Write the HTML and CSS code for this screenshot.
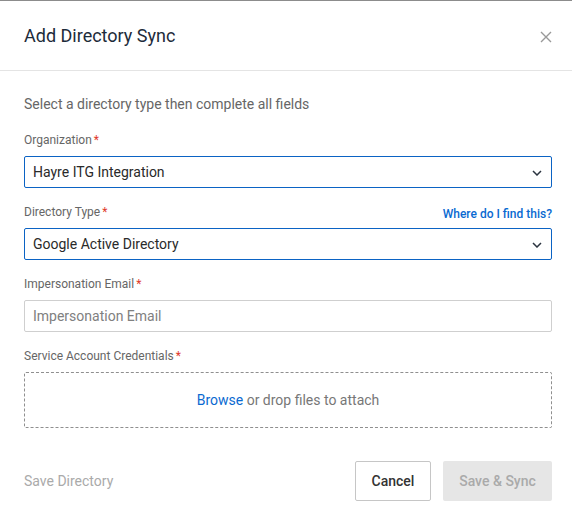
FILE: index.html
```html
<!DOCTYPE html>
<html lang="en">
<head>
    <meta charset="UTF-8">
    <meta name="viewport" content="width=device-width, initial-scale=1.0">
    <title>Add Directory Sync</title>
    <link rel="stylesheet" href="styles.css">
</head>
<body>
    <div class="modal">
        <div class="modal-header">
            <h2 class="modal-title">Add Directory Sync</h2>
            <button class="close-btn" aria-label="Close">
                <svg width="12" height="12" viewBox="0 0 12 12"><path d="M1 1L11 11M11 1L1 11" stroke="#999" stroke-width="1.4" fill="none"/></svg>
            </button>
        </div>
        <div class="modal-body">
            <p class="intro">Select a directory type then complete all fields</p>

            <div class="field">
                <div class="label-row">
                    <label>Organization<span class="req">*</span></label>
                </div>
                <div class="select active">
                    <span>Hayre ITG Integration</span>
                    <svg class="chevron" width="10" height="6" viewBox="0 0 10 6"><path d="M1 1L5 5L9 1" stroke="#2b3440" stroke-width="1.5" fill="none"/></svg>
                </div>
            </div>

            <div class="field">
                <div class="label-row">
                    <label>Directory Type<span class="req">*</span></label>
                    <a href="#" class="help-link">Where do I find this?</a>
                </div>
                <div class="select active">
                    <span>Google Active Directory</span>
                    <svg class="chevron" width="10" height="6" viewBox="0 0 10 6"><path d="M1 1L5 5L9 1" stroke="#2b3440" stroke-width="1.5" fill="none"/></svg>
                </div>
            </div>

            <div class="field">
                <div class="label-row">
                    <label for="email">Impersonation Email<span class="req">*</span></label>
                </div>
                <input type="text" id="email" class="text-input" placeholder="Impersonation Email">
            </div>

            <div class="field">
                <div class="label-row">
                    <label>Service Account Credentials<span class="req">*</span></label>
                </div>
                <div class="dropzone">
                    <a href="#" class="browse">Browse</a>&nbsp;or drop files to attach
                </div>
            </div>
        </div>
        <div class="modal-footer">
            <span class="save-dir">Save Directory</span>
            <div class="actions">
                <button class="btn btn-cancel">Cancel</button>
                <button class="btn btn-save">Save &amp; Sync</button>
            </div>
        </div>
    </div>
</body>
</html>
```

FILE: styles.css
```css
body{
    margin:0;
    font-family: Roboto, "Liberation Sans", Arial, sans-serif;
    background:#fff;
}
.modal{
    border-top:1px solid #8c8c8c;
    background:#fff;
}
.modal-header{
    height:69px;
    display:flex;
    align-items:center;
    justify-content:space-between;
    padding:0 20px 0 24px;
    border-bottom:1px solid #e4e4e4;
}
.modal-title{
    margin:0;
    font-size:18px;
    font-weight:400;
    color:#1d2b3a;
}
.close-btn{
    border:0;
    background:none;
    padding:0;
    margin-top:2px;
    width:12px;
    height:12px;
    display:flex;
}
.modal-body{
    padding:23px 20px 0 24px;
}
.intro{
    margin:0 0 18px 0;
    font-size:14px;
    line-height:20px;
    color:#666;
}
.field{
    margin-bottom:16px;
}
.label-row{
    display:flex;
    justify-content:space-between;
    align-items:flex-end;
    height:16px;
    margin-bottom:8px;
}
label{
    font-size:12px;
    line-height:16px;
    color:#666;
}
.req{
    color:#e0392b;
    margin-left:2px;
}
.help-link{
    font-size:12px;
    font-weight:500;
    color:#0a6ad1;
    text-decoration:none;
    line-height:16px;
    margin-bottom:-2px;
}
.select{
    box-sizing:border-box;
    height:32px;
    display:flex;
    align-items:center;
    justify-content:space-between;
    padding:0 9px 0 8px;
    border:1px solid #c8c8c8;
    border-radius:2px;
    font-size:14px;
    color:#2a2a2a;
}
.select.active{
    border-color:#0b63c4;
}
.chevron{
    margin-top:1px;
}
.text-input{
    box-sizing:border-box;
    width:100%;
    height:32px;
    border:1px solid #cfcfcf;
    border-radius:2px;
    padding:0 8px;
    font-family:inherit;
    font-size:14px;
    color:#2a2a2a;
    outline:none;
}
.text-input::placeholder{
    color:#808080;
}
.dropzone{
    box-sizing:border-box;
    height:56px;
    border:1px dashed #8f8f8f;
    border-radius:2px;
    display:flex;
    align-items:center;
    justify-content:center;
    font-size:14px;
    color:#777;
}
.browse{
    color:#0a6ad1;
    text-decoration:none;
}
.modal-footer{
    display:flex;
    justify-content:space-between;
    align-items:center;
    padding:17px 20px 0 24px;
}
.save-dir{
    font-size:14px;
    color:#aaa;
}
.actions{
    display:flex;
    gap:12px;
}
.btn{
    height:40px;
    border-radius:2px;
    font-family:inherit;
    font-size:14px;
    font-weight:500;
}
.btn-cancel{
    width:76px;
    background:#fff;
    border:1px solid #c6c6c6;
    color:#333;
}
.btn-save{
    width:109px;
    background:#e6e6e6;
    border:0;
    color:#aaa;
}
```
